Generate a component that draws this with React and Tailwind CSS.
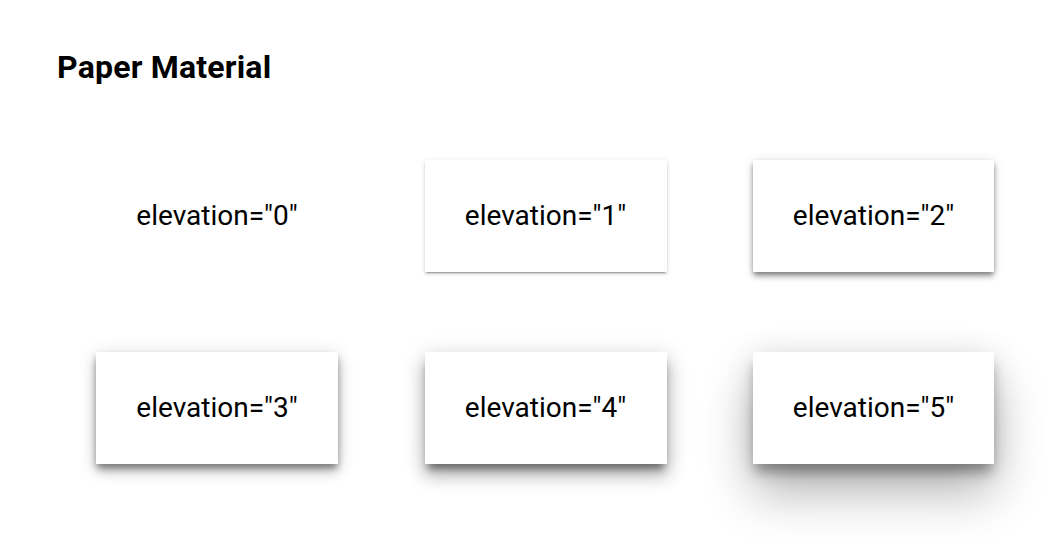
const CARDS = [
  { n: 0, cls: "" },
  { n: 1, cls: "shadow-[0_2px_2px_0_rgba(0,0,0,0.14),0_1px_5px_0_rgba(0,0,0,0.12),0_3px_1px_-2px_rgba(0,0,0,0.2)]" },
  { n: 2, cls: "shadow-[0_5px_6px_0_rgba(0,0,0,0.18),0_1px_10px_0_rgba(0,0,0,0.12),0_3px_5px_-1px_rgba(0,0,0,0.4)]" },
  { n: 3, cls: "shadow-[0_8px_12px_0_rgba(0,0,0,0.18),0_2px_18px_0_rgba(0,0,0,0.12),0_5px_7px_-1px_rgba(0,0,0,0.4)]" },
  { n: 4, cls: "shadow-[0_12px_16px_1px_rgba(0,0,0,0.2),0_4px_22px_2px_rgba(0,0,0,0.12),0_8px_8px_-3px_rgba(0,0,0,0.45)]" },
  { n: 5, cls: "shadow-[0_28px_50px_0_rgba(0,0,0,0.3),0_10px_12px_-2px_rgba(0,0,0,0.35),0_0_30px_0_rgba(0,0,0,0.08)]" },
];

export default function App() {
  return (
    <div className="min-h-[548px] bg-white px-[57px] pt-[49px] text-black" style={{ fontFamily: "Roboto, sans-serif" }}>
      <h1 className="text-[32px] font-bold leading-[36px] tracking-[0.2px]">Paper Material</h1>

      {/* elevation cards */}
      <div className="ml-[39px] mt-[75px] grid grid-cols-[242px_242px_241px] gap-x-[86.5px] gap-y-[80px]">
        {CARDS.map((c) => (
          <div key={c.n} className={`flex h-[112px] items-center justify-center bg-white ${c.cls}`}>
            <span className="text-[28px] leading-[32px]">elevation="{c.n}"</span>
          </div>
        ))}
      </div>
    </div>
  );
}
